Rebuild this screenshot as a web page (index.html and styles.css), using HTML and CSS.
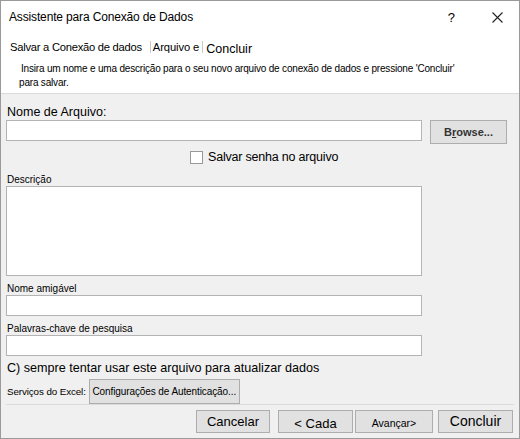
FILE: index.html
```html
<!DOCTYPE html>
<html lang="pt-br">
<head>
    <meta charset="UTF-8">
    <title>Assistente para Conexão de Dados</title>
    <link rel="stylesheet" href="styles.css">
</head>
<body>
    <div class="dialog">
        <!-- Cabeçalho branco -->
        <div class="header">
            <div class="titlebar">
                <span class="title">Assistente para Conexão de Dados</span>
                <span class="help">?</span>
                <svg class="close" width="11" height="11" viewBox="0 0 11 11">
                    <path d="M0.5 0.5 L10.5 10.5 M10.5 0.5 L0.5 10.5" stroke="#222" stroke-width="1.1" fill="none"/>
                </svg>
            </div>
            <div class="steps">
                <span>Salvar a Conexão de dados</span>
                <span class="sep"></span>
                <span class="mid">Arquivo e</span>
                <span class="sep sep-2"></span>
                <span class="last">Concluir</span>
            </div>
            <p class="intro">Insira um nome e uma descrição para o seu novo arquivo de conexão de dados e pressione 'Concluir'<br><span class="intro-2">para salvar.</span></p>
        </div>

        <!-- Corpo -->
        <div class="content">
            <label class="lbl-big">Nome de Arquivo:</label>
            <div class="file-row">
                <div class="field"></div>
                <button class="btn browse">B<u>r</u>owse...</button>
            </div>
            <div class="check-row">
                <span class="checkbox"></span>
                <span>Salvar senha no arquivo</span>
            </div>

            <label class="lbl-small first">Descrição</label>
            <div class="field area"></div>

            <label class="lbl-small">Nome amigável</label>
            <div class="field"></div>

            <label class="lbl-small">Palavras-chave de pesquisa</label>
            <div class="field"></div>

            <div class="always">C) sempre tentar usar este arquivo para atualizar dados</div>

            <div class="services">
                <span>Serviços do Excel:</span>
                <button class="btn auth">Configurações de Autenticação...</button>
            </div>
        </div>

        <!-- Rodapé -->
        <div class="footer">
            <button class="btn foot cancel">Cancelar</button>
            <button class="btn foot back">&lt; Cada</button>
            <button class="btn foot next">Avançar&gt;</button>
            <button class="btn foot finish">Concluir</button>
        </div>
    </div>
</body>
</html>
```

FILE: styles.css
```css
/* Janela do assistente */
* {
    box-sizing: border-box;
}

body {
    margin: 0;
    font-family: "Liberation Sans", Arial, sans-serif;
    color: #000;
}

.dialog {
    width: 520px;
    height: 439px;
    border: 1px solid #9a9a9a;
    background-color: #f0f0f0;
    display: flex;
    flex-direction: column;
}

.header {
    background-color: #fff;
    height: 97px;
    border-bottom: 1px solid #dadada;
}

.titlebar {
    display: flex;
    align-items: center;
    height: 33px;
    padding: 0 16px 1px 8px;
}

.title {
    font-size: 12px;
    letter-spacing: -0.15px;
    flex: 1;
}

.help {
    font-size: 13px;
    margin-right: 37px;
}

.steps {
    display: flex;
    align-items: center;
    height: 26px;
    padding-left: 9px;
    font-size: 11.2px;
    letter-spacing: -0.25px;
}

.steps .sep {
    width: 1px;
    height: 12px;
    background-color: #c8c8c8;
    margin: 0 2px 0 8px;
}

.steps .sep-2 {
    margin: 0 3px 0 3px;
}

.steps .mid {
    letter-spacing: -0.1px;
}

.steps .last {
    font-size: 12.5px;
    letter-spacing: 0;
    padding-top: 3px;
}

.intro {
    margin: 2px 0 0 20px;
    font-size: 10px;
    line-height: 14px;
    letter-spacing: -0.185px;
}

.intro-2 {
    margin-left: -2px;
}

.content {
    flex: 1;
    padding: 11px 0 0 5px;
    display: flex;
    flex-direction: column;
}

.lbl-big {
    font-size: 12.5px;
    line-height: 15px;
    padding-left: 1px;
}

.file-row {
    display: flex;
    gap: 8px;
    align-items: flex-start;
}

.field {
    width: 416px;
    height: 21px;
    background-color: #fff;
    border: 1px solid #b4b4b4;
    flex-shrink: 0;
}

.field.area {
    height: 90px;
}

.btn {
    font-family: "Liberation Sans", Arial, sans-serif;
    background-color: #e1e1e1;
    border: 1px solid #adadad;
    color: #000;
    padding: 0;
}

.browse {
    width: 77px;
    height: 24px;
    font-weight: bold;
    font-size: 11px;
    color: #333;
}

.check-row {
    display: flex;
    align-items: center;
    gap: 5px;
    margin: 4px 0 0 184px;
    height: 18px;
    font-size: 12.5px;
    letter-spacing: -0.2px;
}

.checkbox {
    width: 13px;
    height: 13px;
    background-color: #fff;
    border: 1px solid #999;
}

.lbl-small {
    font-size: 10px;
    line-height: 12px;
    margin-top: 7px;
    padding-left: 1px;
}

.lbl-small.first {
    margin-top: 8px;
}

.always {
    font-size: 12.6px;
    line-height: 18px;
    padding-left: 1px;
    margin-top: 3px;
}

.services {
    display: flex;
    align-items: center;
    font-size: 9.8px;
    letter-spacing: -0.1px;
    margin-top: 2px;
    padding-left: 1px;
}

.auth {
    width: 151px;
    height: 25px;
    font-size: 10px;
    letter-spacing: -0.1px;
    margin-left: 3px;
}

.footer {
    display: flex;
    justify-content: flex-end;
    margin: 0 5px 0 5px;
    padding: 5px 1px 5px 0;
    border-top: 1px solid #dadada;
    height: 34px;
}

.foot {
    width: 75px;
    height: 23px;
    font-size: 13px;
}

.cancel {
    margin-right: 8px;
    width: 74px;
}

.back {
    width: 75px;
    margin-right: 2px;
    padding-top: 3px;
}

.next {
    width: 78px;
    margin-right: 5px;
    font-size: 10.5px;
    padding-top: 2px;
}

.finish {
    font-size: 14px;
    padding-bottom: 2px;
}
```
